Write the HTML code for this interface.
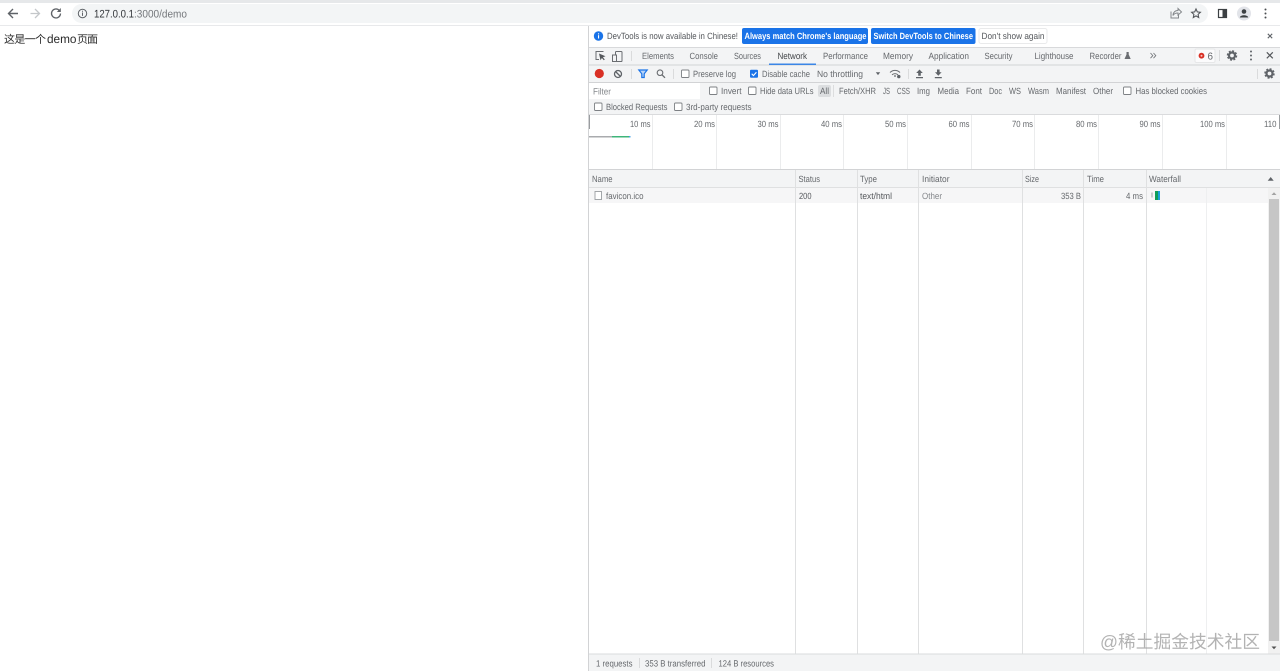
<!DOCTYPE html>
<html lang="zh"><head><meta charset="utf-8"><title>demo</title>
<style>
html,body{margin:0;padding:0;background:#fff;width:1280px;height:671px;overflow:hidden}
svg{display:block}
text{font-family:"Liberation Sans","Noto Sans CJK SC",sans-serif;font-size:9px;fill:#66696d}
.cb{fill:#fff;stroke:#7d8084;stroke-width:.9}
.if{fill:#5f6368}
</style></head><body>
<svg width="1280" height="671" viewBox="0 0 1280 671" xmlns="http://www.w3.org/2000/svg" text-rendering="geometricPrecision">
<defs>
<g id="gear"><circle r="3" fill="none" stroke="#5f6368" stroke-width="2.200"/><circle r="4.500" fill="none" stroke="#5f6368" stroke-width="1.500" stroke-dasharray="2 1.530"/></g>
</defs>
<rect width="1280" height="671" fill="#fff"/>

<!-- browser toolbar -->
<rect width="1280" height="3" fill="#e6e8ea"/>
<rect x="0" y="3" width="1280" height="22" fill="#fff"/>
<rect x="0" y="25" width="1280" height="1" fill="#e8e9eb"/>
<rect x="72" y="4" width="1136" height="19" rx="9.500" fill="#f3f5f6"/>
<path d="M18 13.500H9M13 9l-4.500 4.500L13 18" fill="none" stroke="#5f6368" stroke-width="1.400"/>
<path d="M39.500 13.500h-9M35 9l4.500 4.500L35 18" fill="none" stroke="#c4c7ca" stroke-width="1.300"/>
<path d="M60.500 13.500a4.500 4.500 0 1 1-1.300-3.200" fill="none" stroke="#5f6368" stroke-width="1.300"/><path d="M60.800 8v4h-4z" fill="#5f6368"/>
<circle cx="82.500" cy="13.500" r="4.200" fill="none" stroke="#5f6368" stroke-width="1"/><path d="M82.500 12.500v3.400M82.500 10.800v1" stroke="#5f6368" stroke-width="1"/>
<text x="94" y="17.300" style="font-size:11px;fill:#33363a" textLength="40" lengthAdjust="spacingAndGlyphs">127.0.0.1</text>
<text x="134" y="17.300" style="font-size:11px;fill:#74777b" textLength="53" lengthAdjust="spacingAndGlyphs">:3000/demo</text>
<path d="M1171 11.500v6.500h7.500v-3M1173 15c.5-3 2.500-4.500 5-4.500V8.500l3.500 3.500-3.500 3v-2c-2 0-4 .5-5 2.500z" fill="none" stroke="#85888c" stroke-width="1"/>
<path d="M1196 9l1.300 2.900 3.100.4-2.300 2.100.6 3.100-2.700-1.600-2.700 1.600.6-3.100-2.300-2.100 3.100-.4z" fill="none" stroke="#55585c" stroke-width="1.100"/>
<rect x="1218.500" y="9.500" width="8" height="8" fill="none" stroke="#3c4043" stroke-width="1.200"/><rect x="1222.500" y="9.500" width="4" height="8" fill="#3c4043"/>
<circle cx="1244" cy="13.500" r="7" fill="#e2e4e9"/><circle cx="1244" cy="11.500" r="2.300" fill="#3c4043"/><path d="M1239.800 17.500c.4-3 8-3 8.400 0z" fill="#3c4043"/>
<g fill="#4a4d51"><circle cx="1265.500" cy="9.500" r="1"/><circle cx="1265.500" cy="13.500" r="1"/><circle cx="1265.500" cy="17.500" r="1"/></g>

<!-- page -->
<text x="4" y="43" style="font-size:11px;fill:#2a2a2a" textLength="42" lengthAdjust="spacing">这是一个</text>
<text x="47" y="43" style="font-size:12px;fill:#2a2a2a" textLength="29.500" lengthAdjust="spacingAndGlyphs">demo</text>
<text x="77" y="43" style="font-size:11px;fill:#2a2a2a" textLength="21" lengthAdjust="spacing">页面</text>

<!-- devtools -->
<rect x="588" y="26" width="692" height="645" fill="#fff"/>
<rect x="588" y="26" width="1" height="645" fill="#d2d3d5"/>
<!-- infobar -->
<circle cx="598.500" cy="36" r="4.700" fill="#1a73e8"/><rect x="598" y="35.200" width="1.100" height="3.300" fill="#fff"/><rect x="598" y="33.300" width="1.100" height="1.100" fill="#fff"/>
<text x="607" y="39" textLength="131" lengthAdjust="spacingAndGlyphs" style="fill:#55585c">DevTools is now available in Chinese!</text>
<rect x="742" y="28" width="126" height="16" rx="2" fill="#1a73e8"/>
<text x="744.500" y="39.200" textLength="122" lengthAdjust="spacingAndGlyphs" style="fill:#fff;font-weight:bold">Always match Chrome's language</text>
<rect x="871" y="28" width="104.500" height="16" rx="2" fill="#1a73e8"/>
<text x="873.500" y="39.200" textLength="99.500" lengthAdjust="spacingAndGlyphs" style="fill:#fff;font-weight:bold">Switch DevTools to Chinese</text>
<rect x="979" y="28.500" width="68" height="15" rx="2" fill="#fff" stroke="#e9eaeb"/>
<text x="981.500" y="39.200" textLength="63" lengthAdjust="spacingAndGlyphs" style="fill:#55585c">Don't show again</text>
<path d="M1267.800 33.800l4.400 4.400M1272.200 33.800l-4.400 4.400" stroke="#5f6368" stroke-width="1.100"/>

<!-- tab bar + toolbars -->
<rect x="589" y="47" width="691" height="68" fill="#f3f4f5"/>
<rect x="589" y="47" width="691" height="1" fill="#d8d9db"/>
<rect x="589" y="64.500" width="691" height="1" fill="#d2d3d5"/>
<rect x="589" y="82" width="691" height="1" fill="#d2d3d5"/>
<rect x="589" y="114" width="691" height="1" fill="#dadbdd"/>
<!-- tab bar icons -->
<path d="M603.500 51.500h-7.500v8h3" fill="none" stroke="#6a6d71" stroke-width="1"/><path d="M599 53.500l6.500 2.700-2.600 1 1.900 2.300-1 .8-1.900-2.300-1.400 2.300z" fill="#55585c"/>
<rect x="615.500" y="51.500" width="6.500" height="10" rx=".8" fill="none" stroke="#6a6d71" stroke-width="1"/><rect x="612.500" y="55" width="4" height="6.500" fill="#f3f4f5" stroke="#6a6d71" stroke-width="1"/>
<rect x="631" y="51" width="1" height="10" fill="#dadbdc"/>
<text x="642" y="59" textLength="32" lengthAdjust="spacingAndGlyphs">Elements</text>
<text x="689.500" y="59" textLength="28.500" lengthAdjust="spacingAndGlyphs">Console</text>
<text x="734" y="59" textLength="27" lengthAdjust="spacingAndGlyphs">Sources</text>
<text x="777.500" y="59" textLength="29.500" lengthAdjust="spacingAndGlyphs" style="fill:#44474a">Network</text>
<rect x="769" y="63.500" width="47" height="1.500" fill="#3b86e6"/>
<text x="823" y="59" textLength="45" lengthAdjust="spacingAndGlyphs">Performance</text>
<text x="883" y="59" textLength="30" lengthAdjust="spacingAndGlyphs">Memory</text>
<text x="928.500" y="59" textLength="40.500" lengthAdjust="spacingAndGlyphs">Application</text>
<text x="984.500" y="59" textLength="28" lengthAdjust="spacingAndGlyphs">Security</text>
<text x="1034.500" y="59" textLength="39" lengthAdjust="spacingAndGlyphs">Lighthouse</text>
<text x="1089.500" y="59" textLength="32" lengthAdjust="spacingAndGlyphs">Recorder</text>
<path d="M1126.500 52h2.200v2.500l2 4.500h-6.200l2-4.500z" fill="#6a6d71"/>
<path d="M1150.500 53l2.300 2.600-2.300 2.600M1153.500 53l2.300 2.600-2.300 2.600" fill="none" stroke="#777a7e" stroke-width=".9"/>
<rect x="1195" y="49" width="20" height="13.500" rx="1.500" fill="#fbfbfc" stroke="#e6e7e8"/>
<circle cx="1201.500" cy="55.700" r="2.900" fill="#d93025"/><circle cx="1201.500" cy="55.700" r="1" fill="#f7c9c5"/>
<text x="1207.500" y="59.500" textLength="5.500" lengthAdjust="spacingAndGlyphs" style="font-size:10px">6</text>
<rect x="1219" y="50" width="1" height="11" fill="#dadbdc"/>
<use href="#gear" transform="translate(1232 55.500)"/>
<g class="if"><circle cx="1251" cy="51.500" r="1"/><circle cx="1251" cy="55.500" r="1"/><circle cx="1251" cy="59.500" r="1"/></g>
<path d="M1266.800 52.300l6 6M1272.800 52.300l-6 6" stroke="#55585c" stroke-width="1.200"/>

<!-- network toolbar -->
<circle cx="599.300" cy="73.500" r="4.600" fill="#d93025"/>
<circle cx="618" cy="74" r="3.500" fill="none" stroke="#5f6368" stroke-width="1.300"/><path d="M615.500 71.500l5 5" stroke="#5f6368" stroke-width="1.300"/>
<rect x="631" y="69" width="1" height="10" fill="#dadbdc"/>
<path d="M638.800 70h8.400l-3 3.800v3.700h-2.400v-3.700z" fill="#b9d4f7" stroke="#1a73e8" stroke-width="1.200"/>
<circle cx="660" cy="72.700" r="2.800" fill="none" stroke="#6a6d71" stroke-width="1.100"/><path d="M662 74.800l3 3" stroke="#6a6d71" stroke-width="1.300"/>
<rect x="673" y="69" width="1" height="10" fill="#dadbdc"/>
<rect class="cb" x="681.500" y="70" width="7.500" height="7.500" rx="1"/>
<text x="693" y="77" textLength="43" lengthAdjust="spacingAndGlyphs">Preserve log</text>
<rect x="750" y="69.800" width="8" height="8" rx="1" fill="#1a73e8"/><path d="M751.700 73.800l1.700 1.800 3-3.400" fill="none" stroke="#fff" stroke-width="1.100"/>
<text x="762" y="77" textLength="48" lengthAdjust="spacingAndGlyphs">Disable cache</text>
<text x="817" y="77" textLength="46" lengthAdjust="spacingAndGlyphs">No throttling</text>
<path d="M875.800 72.300h4.400l-2.200 2.800z" fill="#5f6368"/>
<path d="M890 72.500c3-2.800 7-2.800 10 0M892 74.800c2-1.600 4-1.600 6 0" fill="none" stroke="#6a6d71" stroke-width="1"/><circle cx="895" cy="76" r=".9" fill="#5f6368"/><circle cx="898.800" cy="76.600" r="1.700" fill="#5f6368"/>
<rect x="908" y="69" width="1" height="10" fill="#dadbdc"/>
<path d="M919.500 69.500l3.300 3.500h-2v2.800h-2.600V73h-2zM916 77h7v1.200h-7z" fill="#5f6368"/>
<path d="M937 69.500h2.600v2.800h2l-3.300 3.500-3.300-3.500h2zM934.800 77h7v1.200h-7z" fill="#5f6368"/>
<rect x="1257" y="69" width="1" height="10" fill="#dadbdc"/>
<use href="#gear" transform="translate(1269.500 73.500)"/>

<!-- filter row -->
<rect x="589" y="83" width="111" height="16" fill="#fff"/>
<text x="593" y="94.500" textLength="18" lengthAdjust="spacingAndGlyphs" style="fill:#85888c">Filter</text>
<rect class="cb" x="709.500" y="87" width="7.500" height="7.500" rx="1"/>
<text x="721" y="94" textLength="20.500" lengthAdjust="spacingAndGlyphs">Invert</text>
<rect class="cb" x="748.500" y="87" width="7.500" height="7.500" rx="1"/>
<text x="760" y="94" textLength="53.500" lengthAdjust="spacingAndGlyphs">Hide data URLs</text>
<rect x="818" y="85" width="13" height="12" rx="2" fill="#dcdee0"/>
<text x="820" y="94" textLength="9" lengthAdjust="spacingAndGlyphs">All</text>
<rect x="833" y="85" width="1" height="12" fill="#dcddde"/>
<text x="839" y="94" textLength="37" lengthAdjust="spacingAndGlyphs">Fetch/XHR</text>
<text x="883" y="94" textLength="7" lengthAdjust="spacingAndGlyphs">JS</text>
<text x="897" y="94" textLength="13" lengthAdjust="spacingAndGlyphs">CSS</text>
<text x="917" y="94" textLength="13" lengthAdjust="spacingAndGlyphs">Img</text>
<text x="937.500" y="94" textLength="21.500" lengthAdjust="spacingAndGlyphs">Media</text>
<text x="966" y="94" textLength="16" lengthAdjust="spacingAndGlyphs">Font</text>
<text x="989" y="94" textLength="13" lengthAdjust="spacingAndGlyphs">Doc</text>
<text x="1009" y="94" textLength="12" lengthAdjust="spacingAndGlyphs">WS</text>
<text x="1028" y="94" textLength="21" lengthAdjust="spacingAndGlyphs">Wasm</text>
<text x="1056" y="94" textLength="30" lengthAdjust="spacingAndGlyphs">Manifest</text>
<text x="1093" y="94" textLength="20" lengthAdjust="spacingAndGlyphs">Other</text>
<rect class="cb" x="1123.500" y="87" width="7.500" height="7.500" rx="1"/>
<text x="1135.500" y="94" textLength="71.500" lengthAdjust="spacingAndGlyphs">Has blocked cookies</text>
<rect class="cb" x="594.500" y="103" width="7.500" height="7.500" rx="1"/>
<text x="606" y="110" textLength="61.500" lengthAdjust="spacingAndGlyphs">Blocked Requests</text>
<rect class="cb" x="674.500" y="103" width="7.500" height="7.500" rx="1"/>
<text x="686" y="110" textLength="65.500" lengthAdjust="spacingAndGlyphs">3rd-party requests</text>

<!-- overview -->
<g fill="#ebeced">
<rect x="652" y="115" width="1" height="54"/><rect x="716" y="115" width="1" height="54"/><rect x="780" y="115" width="1" height="54"/><rect x="843" y="115" width="1" height="54"/><rect x="907" y="115" width="1" height="54"/><rect x="971" y="115" width="1" height="54"/><rect x="1034" y="115" width="1" height="54"/><rect x="1098" y="115" width="1" height="54"/><rect x="1162" y="115" width="1" height="54"/><rect x="1226" y="115" width="1" height="54"/>
</g>
<rect x="589" y="115" width="1" height="14" fill="#9a9da0"/>
<rect x="1279" y="115" width="1" height="14" fill="#9a9da0"/>
<text x="630" y="127" textLength="20.500" lengthAdjust="spacingAndGlyphs">10 ms</text>
<text x="694" y="127" textLength="21" lengthAdjust="spacingAndGlyphs">20 ms</text>
<text x="757.500" y="127" textLength="21" lengthAdjust="spacingAndGlyphs">30 ms</text>
<text x="821" y="127" textLength="21" lengthAdjust="spacingAndGlyphs">40 ms</text>
<text x="885" y="127" textLength="21" lengthAdjust="spacingAndGlyphs">50 ms</text>
<text x="948.500" y="127" textLength="21" lengthAdjust="spacingAndGlyphs">60 ms</text>
<text x="1012" y="127" textLength="21" lengthAdjust="spacingAndGlyphs">70 ms</text>
<text x="1076" y="127" textLength="21" lengthAdjust="spacingAndGlyphs">80 ms</text>
<text x="1139.500" y="127" textLength="21" lengthAdjust="spacingAndGlyphs">90 ms</text>
<text x="1200" y="127" textLength="25" lengthAdjust="spacingAndGlyphs">100 ms</text>
<text x="1264" y="127" textLength="12.500" lengthAdjust="spacingAndGlyphs">110</text>
<rect x="589" y="136" width="23" height="1.500" fill="#a9abae"/>
<rect x="612" y="136" width="17" height="1.500" fill="#3fb57a"/>
<rect x="629" y="136" width="1.500" height="1.500" fill="#4aa3e8"/>

<!-- table header -->
<rect x="589" y="169" width="691" height="18" fill="#f3f4f5"/>
<rect x="589" y="169" width="691" height="1" fill="#d2d3d5"/>
<rect x="589" y="187" width="691" height="1" fill="#dfe0e1"/>
<rect x="589" y="188" width="679" height="15" fill="#f6f6f7"/>
<g fill="#dfe0e1">
<rect x="795" y="170" width="1" height="484"/><rect x="857" y="170" width="1" height="484"/><rect x="918" y="170" width="1" height="484"/><rect x="1022" y="170" width="1" height="484"/><rect x="1083" y="170" width="1" height="484"/><rect x="1146" y="170" width="1" height="484"/>
</g>
<rect x="1206" y="188" width="1" height="466" fill="#eeeff0"/>
<text x="592" y="182" textLength="20.500" lengthAdjust="spacingAndGlyphs">Name</text>
<text x="798.500" y="182" textLength="21.500" lengthAdjust="spacingAndGlyphs">Status</text>
<text x="860" y="182" textLength="17" lengthAdjust="spacingAndGlyphs">Type</text>
<text x="922" y="182" textLength="27.500" lengthAdjust="spacingAndGlyphs">Initiator</text>
<text x="1025" y="182" textLength="14" lengthAdjust="spacingAndGlyphs">Size</text>
<text x="1087" y="182" textLength="17" lengthAdjust="spacingAndGlyphs">Time</text>
<text x="1149" y="182" textLength="32" lengthAdjust="spacingAndGlyphs">Waterfall</text>
<path d="M1267.700 180.800h6l-3-3.800z" fill="#5f6368"/>
<!-- row -->
<rect x="595" y="191.500" width="6.500" height="8" fill="#fff" stroke="#9a9da0" stroke-width=".9"/>
<text x="606" y="199" textLength="37.500" lengthAdjust="spacingAndGlyphs">favicon.ico</text>
<text x="799" y="199" textLength="12.500" lengthAdjust="spacingAndGlyphs" style="fill:#55585c">200</text>
<text x="860" y="199" textLength="32" lengthAdjust="spacingAndGlyphs" style="fill:#55585c">text/html</text>
<text x="922" y="199" textLength="20" lengthAdjust="spacingAndGlyphs" style="fill:#85888c">Other</text>
<text x="1061" y="199" textLength="20" lengthAdjust="spacingAndGlyphs">353 B</text>
<text x="1126" y="199" textLength="17" lengthAdjust="spacingAndGlyphs">4 ms</text>
<rect x="1151.500" y="192.500" width="1" height="5" fill="#9aa0a6"/>
<rect x="1155" y="191" width="3" height="9" fill="#0f9d58"/>
<rect x="1158" y="191" width="2" height="9" fill="#1a9fd8"/>

<!-- scrollbar -->
<rect x="1268" y="188" width="12" height="466" fill="#f1f1f1"/>
<path d="M1271.500 195h5l-2.500-2.800z" fill="#a3a3a3"/>
<rect x="1269" y="199" width="10" height="442" fill="#c6c6c6"/>
<path d="M1271.500 646.500h5l-2.500 2.800z" fill="#505050"/>

<!-- footer -->
<rect x="589" y="654" width="691" height="17" fill="#f3f4f5"/>
<rect x="589" y="653.500" width="691" height="1" fill="#dadbdd"/>
<rect x="639" y="658" width="1" height="10" fill="#dadbdc"/><rect x="711" y="658" width="1" height="10" fill="#dadbdc"/>
<text x="596" y="666.500" textLength="36.500" lengthAdjust="spacingAndGlyphs">1 requests</text>
<text x="645" y="666.500" textLength="60.500" lengthAdjust="spacingAndGlyphs">353 B transferred</text>
<text x="718.500" y="666.500" textLength="55.500" lengthAdjust="spacingAndGlyphs">124 B resources</text>

<!-- watermark -->
<text x="1100" y="648" textLength="160" lengthAdjust="spacingAndGlyphs" style="font-size:18px;fill:#9a9a9a;fill-opacity:.75">@稀土掘金技术社区</text>
</svg>
</body></html>
